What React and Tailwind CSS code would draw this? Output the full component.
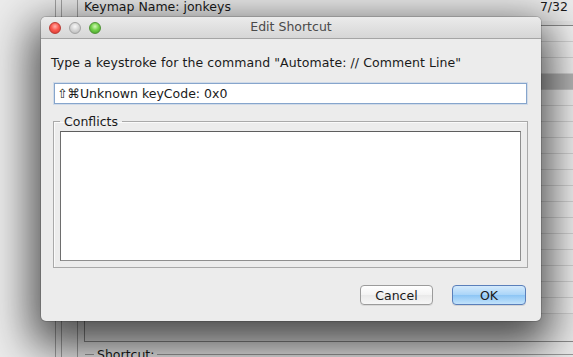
import React from "react";

const rows = Array.from({ length: 18 });

function Light({ bg, border }) {
  return <div className={`w-[12px] h-[12px] rounded-full border ${border} ${bg}`} />;
}

export default function App() {
  return (
    <div className="relative w-[573px] h-[357px] overflow-hidden bg-[#ececec] font-['DejaVu_Sans',sans-serif] text-[#1a1a1a]">
      {/* background application window */}
      <div className="h-full pl-[55px]">
        <div className="h-full border-l border-[#a3a3a3] pl-[5px]">
          <div className="h-full border-l border-[#a3a3a3] pl-[15px]">
            <div className="h-full border-l border-[#a3a3a3] pl-[6px] flex flex-col">
              <div className="h-[13px] shrink-0 flex items-center justify-between text-[12.5px] leading-[13px] pr-[5px]">
                <span>Keymap Name: jonkeys</span>
                <span>7/32</span>
              </div>
              <div className="mt-[8px] h-[321px] border-l border-b border-[#8c8c8c] flex flex-col shrink-0">
                <div className="h-[5px] shrink-0 border-b border-[#8a8a8a] bg-[#e6e6e6]" />
                {rows.map((_, i) => (
                  <div
                    key={i}
                    className={
                      i === 3
                        ? "h-[16px] shrink-0 bg-[#b8b8b8] border-b border-[#c8c8c8]"
                        : "h-[16px] shrink-0 bg-[#f4f4f4] border-b border-[#d6d6d6]"
                    }
                  />
                ))}
              </div>
              <div className="mt-[5px] ml-[1px] flex items-center gap-[3px] text-[12.5px] leading-[15px]">
                <div className="w-[9px] h-px bg-[#9a9a9a]" />
                <span>Shortcut:</span>
                <div className="flex-1 h-px bg-[#9a9a9a]" />
              </div>
            </div>
          </div>
        </div>
      </div>

      {/* dialog sheet */}
      <div className="absolute left-[41px] top-[17px] w-[500px] h-[304px] rounded-[5px] bg-[#ececec] shadow-[0_16px_44px_10px_rgba(0,0,0,0.68),0_0_0_1px_rgba(0,0,0,0.14)] flex flex-col">
        <div className="relative h-[22px] shrink-0 rounded-t-[5px] bg-[linear-gradient(#ebebeb,#d6d6d6)] border-b border-[#a5a5a5] flex items-center pl-[8px] gap-[8px]">
          <Light
            bg="bg-[radial-gradient(circle_at_50%_35%,#ffb3ad_0%,#fb5a50_45%,#d2322b_100%)]"
            border="border-[#b83a33]"
          />
          <Light
            bg="bg-[radial-gradient(circle_at_50%_35%,#f8f8f8_0%,#d4d4d4_50%,#b4b4b4_100%)]"
            border="border-[#a4a4a4]"
          />
          <Light
            bg="bg-[radial-gradient(circle_at_50%_35%,#d4f7b8_0%,#73d24a_45%,#3f9a25_100%)]"
            border="border-[#4f9335]"
          />
          <div className="absolute inset-0 flex items-center justify-center text-[12.5px] text-[#4a4a4a] pointer-events-none">
            Edit Shortcut
          </div>
        </div>

        <div className="flex flex-col pl-[12px] pr-[13px] pt-[16px]">
          <div className="-ml-[2px] text-[12.5px] leading-[15px] tracking-[0.08px]">
            Type a keystroke for the command "Automate: // Comment Line"
          </div>
          <div className="mt-[13px] ml-[1px] mr-[1px] h-[21px] border border-[#86a5cc] bg-white flex items-center pl-[2px] text-[12.5px] leading-[15px] shadow-[0_0_0_1px_rgba(160,190,225,0.35)]">
            ⇧⌘Unknown keyCode: 0x0
          </div>
          <fieldset className="mt-[10px] border border-[#a9a9a9] px-[6px] pb-[6px] shadow-[inset_1px_1px_0_#fafafa]">
            <legend className="px-[4px] text-[12.5px] leading-[15px]">Conflicts</legend>
            <div className="mt-[2px] h-[130px] bg-white border border-[#8e8e8e] border-t-[#5e5e5e] border-l-[#6e6e6e]" />
          </fieldset>
          <div className="mt-[17px] flex justify-end gap-[19px] pr-[2px]">
            <button className="w-[73px] h-[20px] rounded-[4px] border border-[#9b9b9b] bg-[linear-gradient(#ffffff,#f3f3f3_50%,#e9e9e9_51%,#f7f7f7)] text-[12.5px] leading-[15px] shadow-[0_1px_0_rgba(0,0,0,0.08)]">
              Cancel
            </button>
            <button className="w-[74px] h-[20px] rounded-[4px] border border-[#5a7fba] bg-[linear-gradient(#d4eafc,#a9d4f8_50%,#8cc5f5_51%,#c3e3fb)] text-[12.5px] leading-[15px] shadow-[0_1px_0_rgba(0,0,0,0.1)]">
              OK
            </button>
          </div>
        </div>
      </div>
    </div>
  );
}
